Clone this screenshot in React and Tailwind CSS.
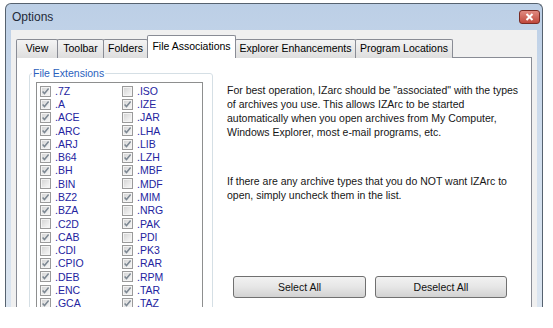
import React from 'react';

const LEFT = [
  ['.7Z', true], ['.A', true], ['.ACE', true], ['.ARC', true], ['.ARJ', true],
  ['.B64', true], ['.BH', true], ['.BIN', false], ['.BZ2', true], ['.BZA', true],
  ['.C2D', false], ['.CAB', true], ['.CDI', false], ['.CPIO', true], ['.DEB', true],
  ['.ENC', true], ['.GCA', true],
];

const RIGHT = [
  ['.ISO', false], ['.IZE', true], ['.JAR', false], ['.LHA', true], ['.LIB', true],
  ['.LZH', true], ['.MBF', true], ['.MDF', false], ['.MIM', true], ['.NRG', false],
  ['.PAK', true], ['.PDI', false], ['.PK3', true], ['.RAR', true], ['.RPM', true],
  ['.TAR', true], ['.TAZ', true],
];

const TABS = [
  { label: 'View', w: 'w-[42px]' },
  { label: 'Toolbar', w: 'w-[47px]' },
  { label: 'Folders', w: 'w-[45px]' },
  { label: 'File Associations', w: 'w-[89px]', active: true },
  { label: 'Explorer Enhancements', w: 'w-[121px]' },
  { label: 'Program Locations', w: 'w-[98px]' },
];

const CheckBox = ({ checked }) => (
  <svg width="11" height="11" viewBox="0 0 11 11" className="shrink-0">
    <defs>
      <linearGradient id="cbfill" x1="0" y1="0" x2="1" y2="1">
        <stop offset="0" stopColor="#d6d6d6" />
        <stop offset="1" stopColor="#f6f6f6" />
      </linearGradient>
    </defs>
    <rect x="0.5" y="0.5" width="10" height="10" fill="#f4f4f4" stroke="#9a9a9a" />
    <rect x="2" y="2" width="7" height="7" fill="url(#cbfill)" />
    {checked && (
      <path d="M2.6 5.4 L4.5 7.6 L8.6 2.6" fill="none" stroke="#7d8893" strokeWidth="1.5" />
    )}
  </svg>
);

const Item = ({ label, checked }) => (
  <div className="flex items-center gap-[4px] h-[13.27px]">
    <CheckBox checked={checked} />
    <span className="text-[10.5px] leading-none text-[#2424a0]">{label}</span>
  </div>
);

const Button = ({ children, w }) => (
  <button
    className={`${w} h-[22px] rounded-[3px] border border-[#707070] bg-gradient-to-b from-[#f2f2f2] via-[#e6e6e6] to-[#d2d2d2] text-[10.5px] text-[#111]`}
  >
    {children}
  </button>
);

export default function App() {
  return (
    <div className="w-[553px] h-[328px] bg-white overflow-hidden font-['Liberation_Sans',Arial,sans-serif]">
      <div className="ml-[5px] mt-[3px] w-[538px] h-[304px] overflow-hidden rounded-t-[6px] border border-b-0 border-[#56626f] bg-gradient-to-b from-[#bccfe6] via-[#d2dfee] to-[#dbe5f0] flex flex-col">
        {/* title bar */}
        <div className="h-[26px] flex items-center justify-between shrink-0">
          <span className="pl-[6px] text-[12px] text-[#1e2a38]">Options</span>
          <div className="mr-[2px] w-[21px] h-[14px] rounded-[3px] border border-[#7a2b24] bg-gradient-to-b from-[#e08a80] to-[#c0473c] flex items-center justify-center">
            <svg width="9" height="8" viewBox="0 0 9 8">
              <path d="M1.5 1 L7.5 7 M7.5 1 L1.5 7" stroke="#fff" strokeWidth="2" />
            </svg>
          </div>
        </div>

        {/* client area */}
        <div className="mx-[5px] flex-1 bg-[#f0f0f0] px-[5px] pt-[5px] flex flex-col">
          <div className="flex items-end h-[23px] relative z-10">
            {TABS.map((t, i) =>
              t.active ? (
                <div
                  key={t.label}
                  className={`${t.w} h-[23px] -ml-px bg-white border border-b-0 border-[#898c95] rounded-t-[2px] flex items-center justify-center text-[10.5px] text-black`}
                >
                  {t.label}
                </div>
              ) : (
                <div
                  key={t.label}
                  className={`${t.w} h-[19px] ${i ? '-ml-px' : ''} bg-gradient-to-b from-[#f4f4f4] to-[#dedede] border border-b-0 border-[#898c95] rounded-t-[2px] flex items-center justify-center text-[10.5px] text-black`}
                >
                  {t.label}
                </div>
              )
            )}
          </div>

          <div className="-mt-px flex-1 bg-white border border-[#898c95] flex pl-[12px]">
            {/* group box */}
            <div className="relative mt-[15px] w-[184px] h-[260px] border border-[#d5dfe5] rounded-[3px] pt-[8px] pl-[6px] pr-[9px] shrink-0">
              <span className="absolute left-[2px] top-[-7px] px-[1px] bg-white text-[10.5px] leading-[12px] text-[#2b5fbd]">
                File Extensions
              </span>
              <div className="h-[250px] border border-[#8e8f8f] bg-white pt-[1.5px] pl-[3px] grid grid-cols-[82px_1fr]">
                <div>
                  {LEFT.map(([l, c]) => (
                    <Item key={l} label={l} checked={c} />
                  ))}
                </div>
                <div>
                  {RIGHT.map(([l, c]) => (
                    <Item key={l} label={l} checked={c} />
                  ))}
                </div>
              </div>
            </div>

            {/* description + buttons */}
            <div className="ml-[14px] pt-[25px] flex flex-col text-[10.5px] leading-[14px] text-[#161616]">
              <p>
                For best operation, IZarc should be "associated" with the types
                <br />
                of archives you use. This allows IZArc to be started
                <br />
                automatically when you open archives from My Computer,
                <br />
                Windows Explorer, most e-mail programs, etc.
              </p>
              <p className="mt-[35px]">
                If there are any archive types that you do NOT want IZArc to
                <br />
                open, simply uncheck them in the list.
              </p>
              <div className="mt-[74px] ml-[6px] flex gap-[9px]">
                <Button w="w-[133px]">Select All</Button>
                <Button w="w-[132px]">Deselect All</Button>
              </div>
            </div>
          </div>
        </div>
      </div>
    </div>
  );
}
